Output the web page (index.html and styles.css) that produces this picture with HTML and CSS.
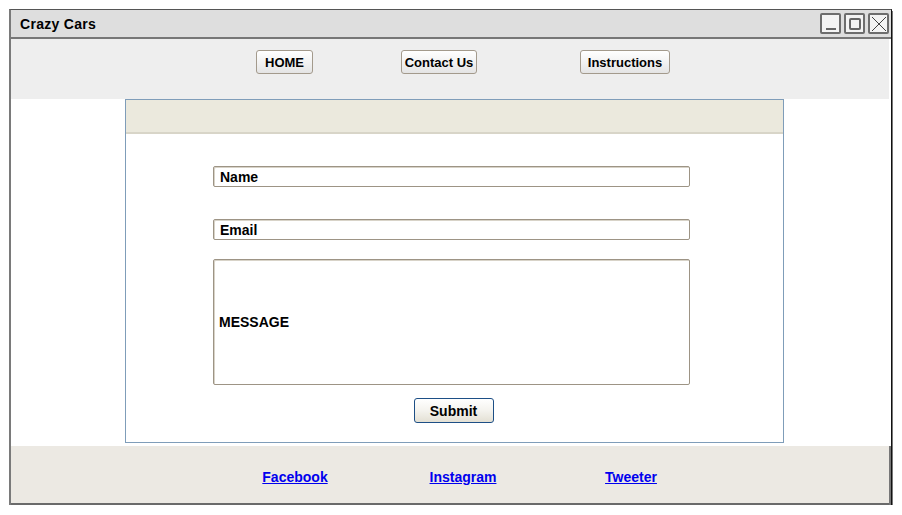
FILE: index.html
```html
<!DOCTYPE html>
<html>
<head>
<meta charset="utf-8">
<title>Crazy Cars</title>
<link rel="stylesheet" href="styles.css">
</head>
<body>
<div class="window">
  <div class="titlebar">
    <span class="title">Crazy Cars</span>
    <div class="controls">
      <span class="ctrl"><svg width="16" height="16" viewBox="0 0 16 16"><line x1="3" y1="13" x2="13" y2="13" stroke="#666" stroke-width="2"/></svg></span>
      <span class="ctrl"><svg width="16" height="16" viewBox="0 0 16 16"><rect x="3" y="3" width="10" height="10" rx="1" fill="none" stroke="#666" stroke-width="2"/></svg></span>
      <span class="ctrl"><svg width="16" height="16" viewBox="0 0 16 16"><line x1="1" y1="1" x2="15" y2="15" stroke="#444" stroke-width="1"/><line x1="15" y1="1" x2="1" y2="15" stroke="#444" stroke-width="1"/></svg></span>
    </div>
  </div>
  <div class="navbar">
    <span class="navbtn home">HOME</span>
    <span class="navbtn contact">Contact Us</span>
    <span class="navbtn instr">Instructions</span>
  </div>
  <div class="content">
    <div class="panel">
      <div class="panel-head"></div>
      <div class="panel-body">
        <div class="field">Name</div>
        <div class="field email">Email</div>
        <div class="field message">MESSAGE</div>
        <div class="submit-row"><span class="submit">Submit</span></div>
      </div>
    </div>
  </div>
  <div class="footer">
    <span class="cell"><a href="#">Facebook</a></span>
    <span class="cell"><a href="#">Instagram</a></span>
    <span class="cell"><a href="#">Tweeter</a></span>
  </div>
</div>
</body>
</html>
```
FILE: styles.css
```css
html, body {
  margin: 0;
  padding: 0;
  background: #ffffff;
}
body {
  font-family: "Liberation Sans", Arial, sans-serif;
  font-weight: bold;
  color: #000;
}
.window {
  margin: 9px 0 0 9px;
  width: 880px;
  border-top: 1px solid #555;
  border-left: 2px solid #7a7a7a;
  border-right: 1px solid #111;
  box-shadow: 1px 2px 0 #777;
  background: #fff;
}
.titlebar {
  height: 27px;
  background: #dedede;
  border-bottom: 2px solid #777;
  display: flex;
  align-items: center;
  justify-content: space-between;
}
.title {
  font-size: 14px;
  padding-left: 9px;
  letter-spacing: 0.3px;
}
.controls {
  display: flex;
  gap: 3px;
  padding-right: 2px;
}
.ctrl {
  width: 17px;
  height: 17px;
  border: 2px solid #6d6d6d;
  border-radius: 2px;
  background: #f4f4f4;
  display: flex;
  align-items: center;
  justify-content: center;
}
.navbar {
  height: 60px;
  background: #eeeeee;
  display: flex;
  align-items: flex-start;
  padding-top: 11px;
  box-sizing: border-box;
  margin-right: 2px;
}
.navbtn {
  height: 22px;
  border: 1px solid #a39a8c;
  border-radius: 3px;
  background: linear-gradient(#ffffff, #f0f0f0 60%, #e4e4e4);
  font-size: 13px;
  display: flex;
  align-items: center;
  justify-content: center;
  box-sizing: content-box;
  white-space: nowrap;
}
.home { width: 55px; margin-left: 245px; }
.contact { width: 74px; margin-left: 88px; }
.instr { width: 88px; margin-left: 103px; }
.content {
  padding: 0 107px 3px 114px;
}
.panel {
  width: 657px;
  border: 1px solid #7f9db9;
  background: #fff;
}
.panel-head {
  height: 32px;
  background: #ebe9dd;
  border-bottom: 2px solid #d8d5c8;
}
.panel-body {
  padding: 32px 0 19px 87px;
}
.field {
  width: 469px;
  height: 19px;
  border: 1px solid #9d9485;
  border-radius: 2px;
  box-shadow: inset 1px 1px 0 #d8d3c8;
  font-size: 14px;
  padding-left: 6px;
  display: flex;
  align-items: center;
}
.email { margin-top: 32px; }
.message {
  margin-top: 19px;
  height: 124px;
  width: 470px;
  padding-left: 5px;
}
.submit-row {
  display: flex;
  justify-content: center;
  margin-top: 13px;
  margin-left: -87px;
  padding-right: 2px;
}
.submit {
  width: 78px;
  height: 23px;
  border: 1px solid #1d4f86;
  border-radius: 3px;
  background: linear-gradient(#ffffff, #f4f3ee 50%, #e3e0d4);
  font-size: 14px;
  display: flex;
  align-items: center;
  justify-content: center;
}
.footer {
  height: 59px;
  background: #ece9e3;
  border-bottom: 2px solid #6a6a6a;
  display: flex;
  align-items: center;
  padding-left: 200px;
  padding-top: 4px;
  box-sizing: border-box;
  margin-right: 2px;
  box-shadow: 2px 0 0 #777;
}
.cell {
  width: 168px;
  text-align: center;
  font-size: 14px;
}
.cell a {
  color: #0000ee;
  text-decoration: underline;
}
```
